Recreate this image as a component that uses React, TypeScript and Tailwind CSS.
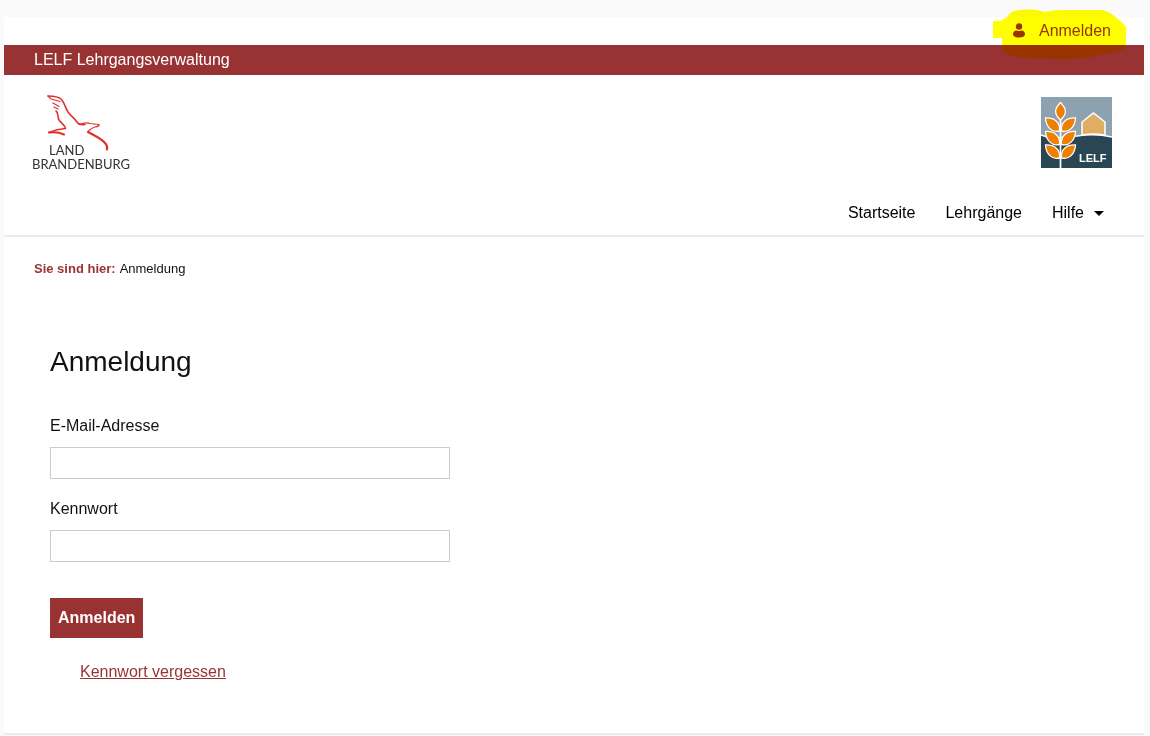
import React from "react";

function Marker() {
  return (
    <svg
      className="pointer-events-none absolute -top-2 right-[17px] h-[52px] w-[136px] mix-blend-multiply"
      viewBox="0 0 136 52"
      aria-hidden="true"
    >
      <path
        fill="#ffff00"
        d="M2 12H10L16 8Q20 1 30 1Q42 -1 54 3Q62 1 72 1H112Q121 4 128 11Q134 15 135 19V39Q126 44 110 46Q90 51 62 50Q36 50 20 47Q11 44 11 37V29H2Z"
      />
    </svg>
  );
}

function UserIcon() {
  return (
    <svg className="h-4 w-3" viewBox="0 0 12 16" fill="#993333" aria-hidden="true">
      <circle cx="6" cy="3.500" r="3.200" />
      <path d="M0 11.500Q0 7.800 3.600 7.500Q6 8.700 8.400 7.500Q12 7.800 12 11.500Q11.500 14.500 6 14.500Q.5 14.500 0 11.500Z" />
    </svg>
  );
}

function BrandenburgLogo() {
  return (
    <svg className="h-20 w-[100px]" viewBox="0 0 100 80" role="img" aria-label="Land Brandenburg">
      <g fill="none" stroke="#e2312d" strokeLinecap="round" strokeLinejoin="round">
        <path strokeWidth="1.600" d="M15 1C20 1 26 2 28.500 4.500C31.500 8 32.500 13 35 17C38 21 41 23 43.500 26.500C45 29 48 30 52 29.500" />
        <path strokeWidth="1.200" d="M46 29.500Q53 27 57 28.500L66 29.500Q67 31 62 32Q58 33 55 36.500L59 39" />
        <path strokeWidth="2.100" d="M55 37C60 40 68 43 72 48Q75 51 74 54.500" />
        <path strokeWidth="1.200" d="M15 1L18 4L27 6.500M20 8L26 11.500M21 12L25 14" />
        <path strokeWidth="1.600" d="M23 16C26 18 24 22 26 25C28 28 32 30 32.500 33.500Q24 34 16 37.500" />
        <path strokeWidth="2" d="M16 37.500Q25 36.500 31 39.500" />
      </g>
      <g fill="#333333" className="font-['Lato',sans-serif] text-[13px]">
        <text x="16" y="60">LAND</text>
        <text x="-1" y="74">BRANDENBURG</text>
      </g>
    </svg>
  );
}

function LelfLogo() {
  return (
    <svg className="h-[71px] w-[71px]" viewBox="0 0 71 71" role="img" aria-label="LELF">
      <rect width="71" height="71" fill="#8da2b0" />
      <path d="M0 38C10 43 22 40 36 39Q54 36 71 40V71H0Z" fill="#284653" />
      <path d="M0 38C10 43 22 40 36 39Q54 36 71 40" fill="none" stroke="#fff" strokeWidth="1.500" />
      <path d="M41 38V25L52.500 16L64 25V38Q52 36 41 38Z" fill="#dfad64" stroke="#fff" strokeWidth="1.500" />
      <path d="M19.500 22V71" stroke="#fff" strokeWidth="1.700" />
      <g fill="#ee7f00" stroke="#fff" strokeWidth="1.300">
        <path d="M19.500 5.500C26 12 26 17 19.500 23C13 17 13 12 19.500 5.500Z" />
        <path d="M18.500 34C11 36 5 30 4.500 21C13 20.500 19.500 25 18.500 34Z" />
        <path d="M20.500 34C28 36 34 30 34.500 21C26 20.500 19.500 25 20.500 34Z" />
        <path d="M18.500 47.500C11 49.500 5 43.500 4.500 34.500C13 34 19.500 38.500 18.500 47.500Z" />
        <path d="M20.500 47.500C28 49.500 34 43.500 34.500 34.500C26 34 19.500 38.500 20.500 47.500Z" />
        <path d="M18.500 61C11 63 5 57 4.500 48C13 47.500 19.500 52 18.500 61Z" />
        <path d="M20.500 61C28 63 34 57 34.500 48C26 47.500 19.500 52 20.500 61Z" />
      </g>
      <text x="38" y="65" fill="#fff" className="font-['Liberation_Sans',sans-serif] text-[11px] font-bold">
        LELF
      </text>
    </svg>
  );
}

function Field({ id, label, type }: { id: string; label: string; type: string }) {
  return (
    <div className="flex flex-col gap-[9px]">
      <label htmlFor={id}>{label}</label>
      <input id={id} name={id} type={type} className="h-8 w-full border border-[#cccccc] bg-white px-2" />
    </div>
  );
}

export default function App() {
  return (
    <div className="min-h-screen bg-[#fafafa] pt-[17px] pr-[6px] pl-1 font-['Liberation_Sans',Arial,sans-serif] text-base text-[#111111]">
      <div className="bg-white">
        <header className="border-b-2 border-[#ebebeb]">
          <div className="relative flex h-7 justify-end pr-[33px]">
            <a href="#anmelden" className="flex items-center gap-[14px] text-[#993333]">
              <UserIcon />
              Anmelden
            </a>
            <Marker />
          </div>
          <div className="bg-[#993333] px-[30px] py-[3px] text-white">LELF Lehrgangsverwaltung</div>
          <div className="flex items-start justify-between pt-5 pr-8 pl-[29px]">
            <a href="#brandenburg">
              <BrandenburgLogo />
            </a>
            <a href="#lelf" className="pt-[2px]">
              <LelfLogo />
            </a>
          </div>
          <nav className="flex justify-end gap-[30px] pt-[26px] pr-10 pb-[10px] text-black">
            <a href="#startseite">Startseite</a>
            <a href="#lehrgaenge">Lehrgänge</a>
            <button type="button" className="flex items-center gap-[10px]">
              Hilfe
              <svg className="h-[5px] w-[10px]" viewBox="0 0 10 5" aria-hidden="true">
                <path d="M0 0H10L5 5Z" />
              </svg>
            </button>
          </nav>
        </header>

        <main className="border-b-2 border-[#ebebeb] pb-[49px]">
          <p className="flex gap-1 px-[30px] pt-[22px] text-[13px] leading-5">
            <strong className="text-[#993333]">Sie sind hier:</strong>
            <span>Anmeldung</span>
          </p>
          <div className="px-[46px] pt-[65px]">
            <h1 className="text-[28px] leading-9">Anmeldung</h1>
            <form className="pt-[34px]" onSubmit={(e) => e.preventDefault()}>
              <div className="flex max-w-[400px] flex-col gap-[18px]">
                <Field id="email" label="E-Mail-Adresse" type="email" />
                <Field id="kennwort" label="Kennwort" type="password" />
              </div>
              <button type="submit" className="mt-9 block h-10 bg-[#993333] px-2 font-bold text-white">
                Anmelden
              </button>
              <p className="pt-[22px] pl-[30px]">
                <a href="#vergessen" className="text-[#993333] underline">
                  Kennwort vergessen
                </a>
              </p>
            </form>
          </div>
        </main>
      </div>
    </div>
  );
}
